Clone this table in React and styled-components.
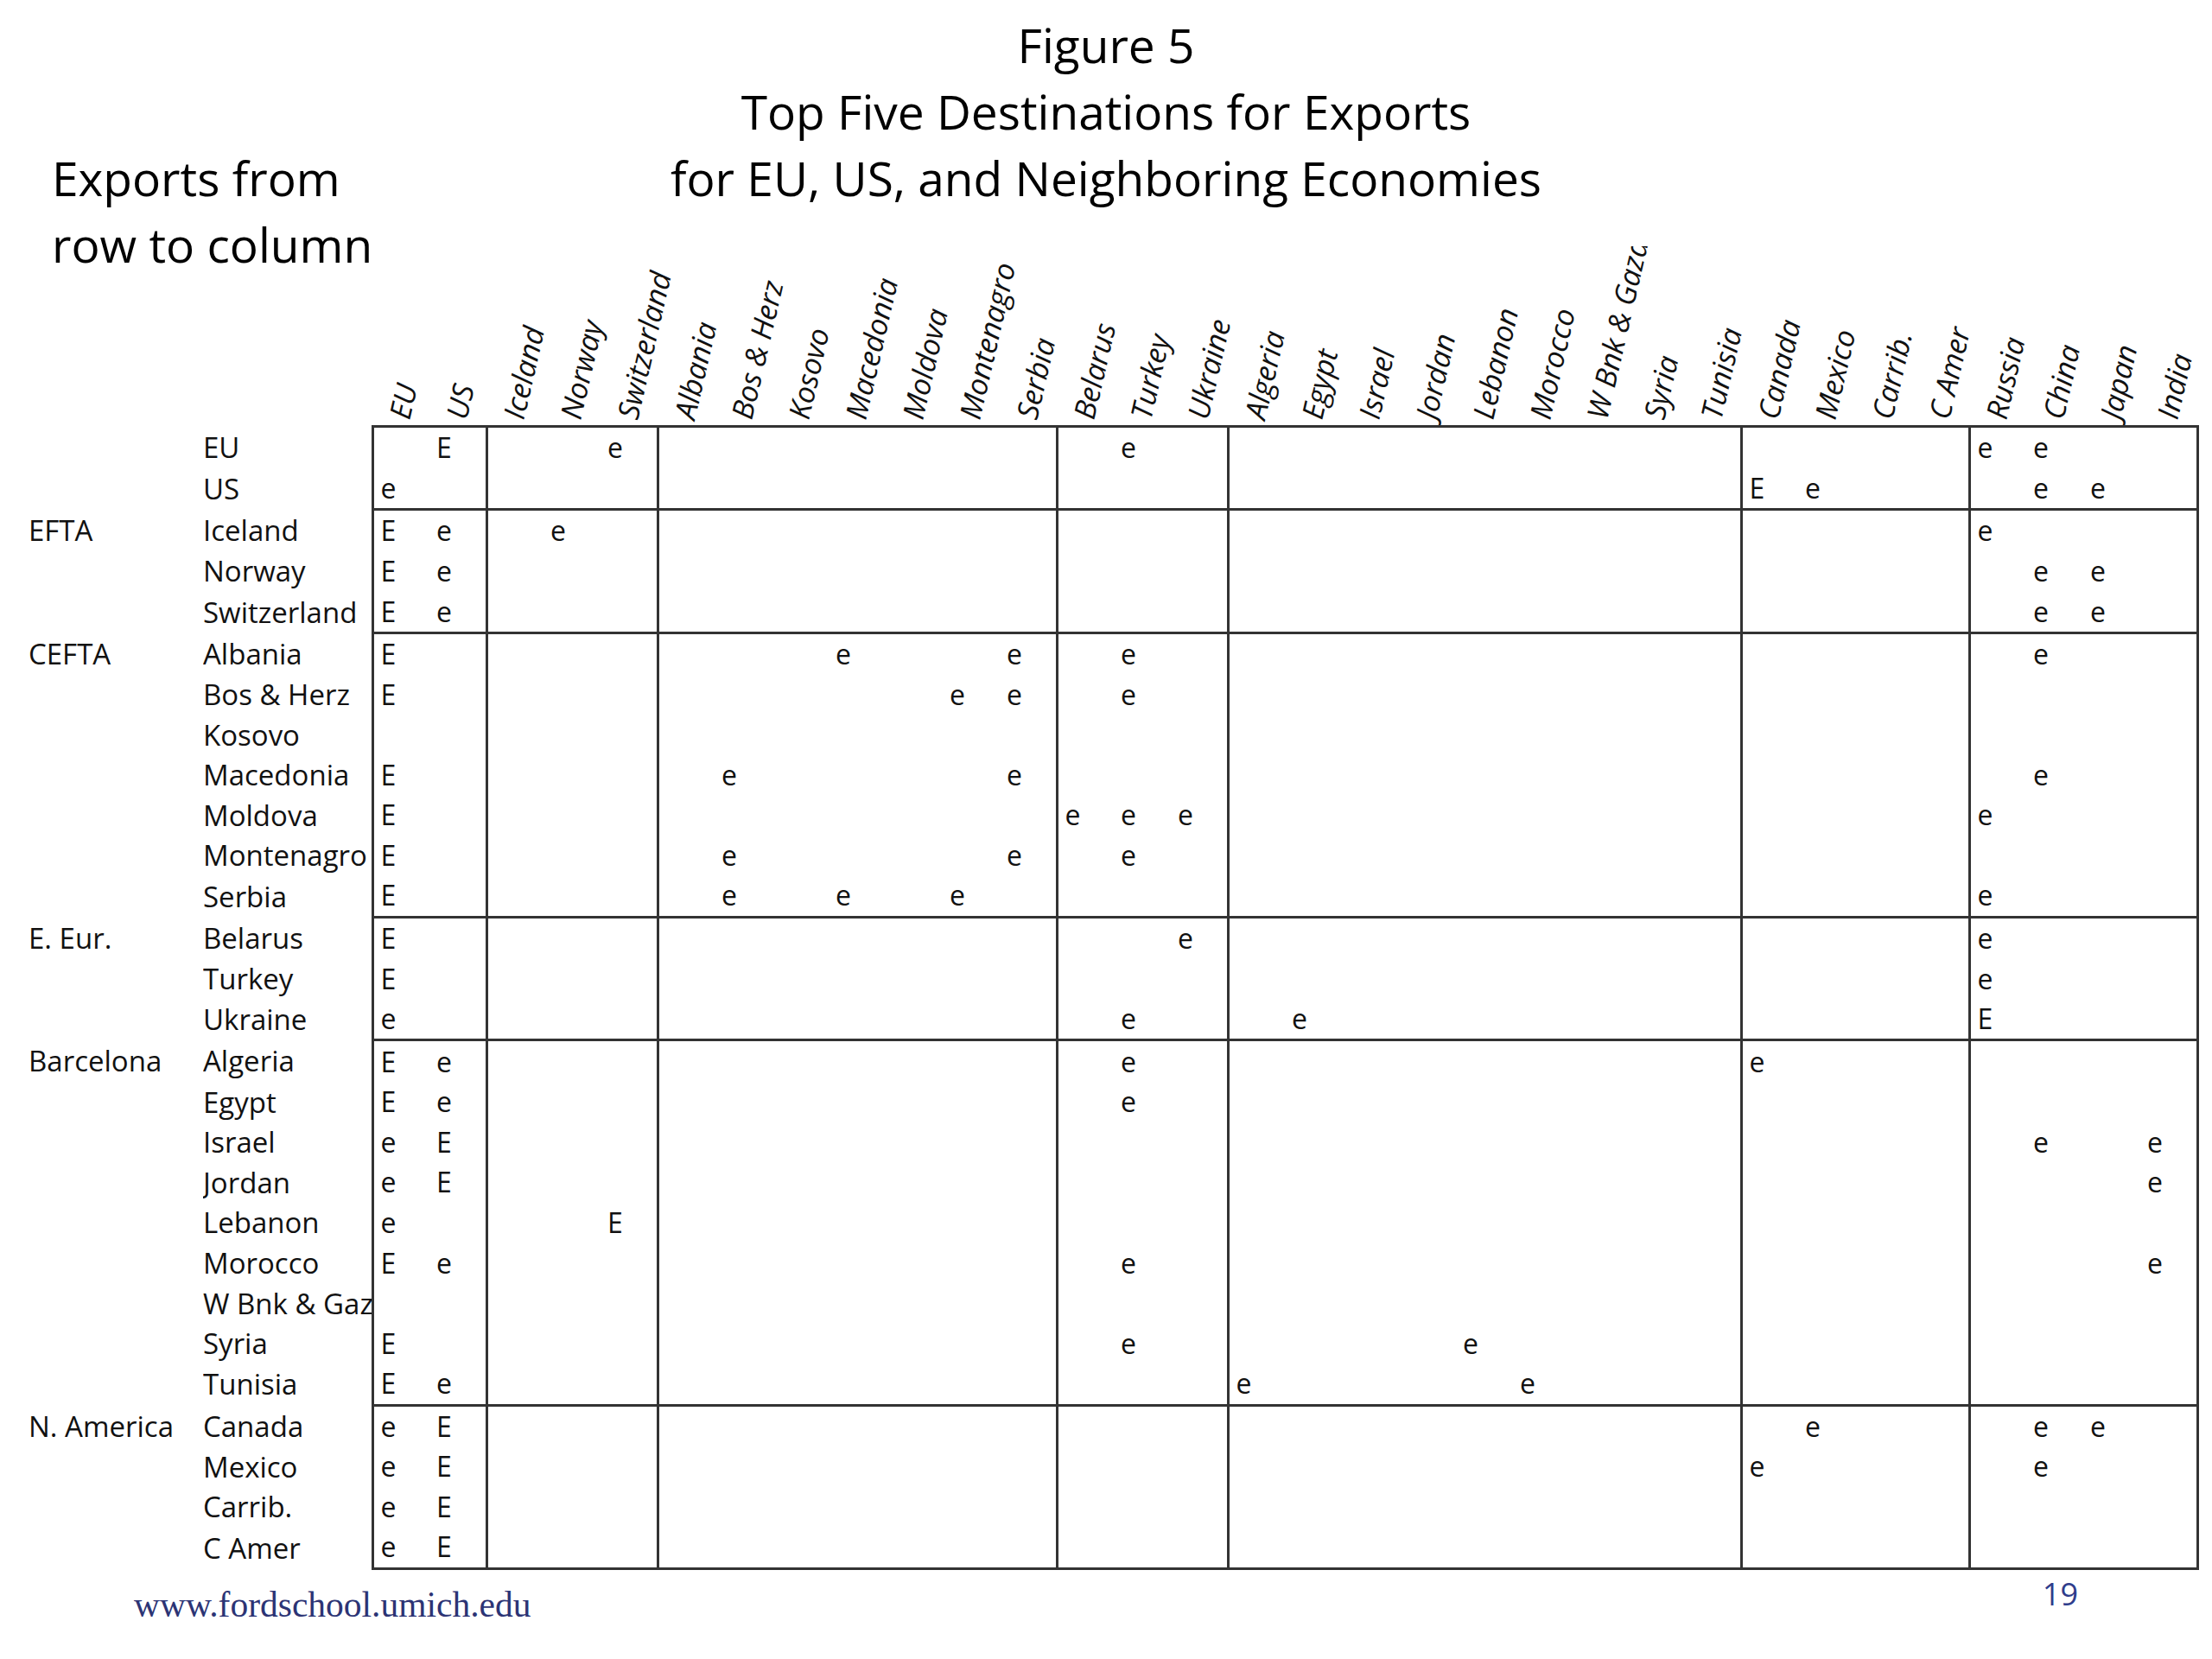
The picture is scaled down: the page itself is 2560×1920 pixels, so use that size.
import React from 'react';
// Styled
import styled, { createGlobalStyle } from 'styled-components';

const COL_W = 66;
const ROW_H = 46.57;

const columns = [
	'EU', 'US',
	'Iceland', 'Norway', 'Switzerland',
	'Albania', 'Bos & Herz', 'Kosovo', 'Macedonia', 'Moldova', 'Montenagro', 'Serbia',
	'Belarus', 'Turkey', 'Ukraine',
	'Algeria', 'Egypt', 'Israel', 'Jordan', 'Lebanon', 'Morocco', 'W Bnk & Gaza', 'Syria', 'Tunisia',
	'Canada', 'Mexico', 'Carrib.', 'C Amer',
	'Russia', 'China', 'Japan', 'India',
];

// last column of each block gets the heavy rule
const blockEnds = [1, 4, 11, 14, 23, 27, 31];

// exporter rows, marks keyed by destination column
const groups = [
	{
		name: '',
		rows: [
			['EU', { 1: 'E', 4: 'e', 13: 'e', 28: 'e', 29: 'e' }],
			['US', { 0: 'e', 24: 'E', 25: 'e', 29: 'e', 30: 'e' }],
		],
	},
	{
		name: 'EFTA',
		rows: [
			['Iceland', { 0: 'E', 1: 'e', 3: 'e', 28: 'e' }],
			['Norway', { 0: 'E', 1: 'e', 29: 'e', 30: 'e' }],
			['Switzerland', { 0: 'E', 1: 'e', 29: 'e', 30: 'e' }],
		],
	},
	{
		name: 'CEFTA',
		rows: [
			['Albania', { 0: 'E', 8: 'e', 11: 'e', 13: 'e', 29: 'e' }],
			['Bos & Herz', { 0: 'E', 10: 'e', 11: 'e', 13: 'e' }],
			['Kosovo', {}],
			['Macedonia', { 0: 'E', 6: 'e', 11: 'e', 29: 'e' }],
			['Moldova', { 0: 'E', 12: 'e', 13: 'e', 14: 'e', 28: 'e' }],
			['Montenagro', { 0: 'E', 6: 'e', 11: 'e', 13: 'e' }],
			['Serbia', { 0: 'E', 6: 'e', 8: 'e', 10: 'e', 28: 'e' }],
		],
	},
	{
		name: 'E. Eur.',
		rows: [
			['Belarus', { 0: 'E', 14: 'e', 28: 'e' }],
			['Turkey', { 0: 'E', 28: 'e' }],
			['Ukraine', { 0: 'e', 13: 'e', 16: 'e', 28: 'E' }],
		],
	},
	{
		name: 'Barcelona',
		rows: [
			['Algeria', { 0: 'E', 1: 'e', 13: 'e', 24: 'e' }],
			['Egypt', { 0: 'E', 1: 'e', 13: 'e' }],
			['Israel', { 0: 'e', 1: 'E', 29: 'e', 31: 'e' }],
			['Jordan', { 0: 'e', 1: 'E', 31: 'e' }],
			['Lebanon', { 0: 'e', 4: 'E' }],
			['Morocco', { 0: 'E', 1: 'e', 13: 'e', 31: 'e' }],
			['W Bnk & Gaza', {}],
			['Syria', { 0: 'E', 13: 'e', 19: 'e' }],
			['Tunisia', { 0: 'E', 1: 'e', 15: 'e', 20: 'e' }],
		],
	},
	{
		name: 'N. America',
		rows: [
			['Canada', { 0: 'e', 1: 'E', 25: 'e', 29: 'e', 30: 'e' }],
			['Mexico', { 0: 'e', 1: 'E', 24: 'e', 29: 'e' }],
			['Carrib.', { 0: 'e', 1: 'E' }],
			['C Amer', { 0: 'e', 1: 'E' }],
		],
	},
];

const App = () => {
	return (
		<Page>
			<GlobalStyle />
			<Top>
				<Title>
					Figure 5
					<br />
					Top Five Destinations for Exports
					<br />
					for EU, US, and Neighboring Economies
				</Title>
				<Caption>
					Exports from
					<br />
					row to column
				</Caption>
				<HeaderStrip>
					{columns.map((c) => (
						<HeaderCell key={c}>
							<HeaderText>{c}</HeaderText>
						</HeaderCell>
					))}
				</HeaderStrip>
			</Top>
			<Matrix>
				<colgroup>
					<col style={{ width: 235 }} />
					<col style={{ width: 196 }} />
					{columns.map((c) => (
						<col key={c} style={{ width: COL_W }} />
					))}
				</colgroup>
				<tbody>
					{groups.map((g, gi) =>
						g.rows.map(([label, marks], ri) => (
							<tr key={label}>
								<GroupLabel>{ri === 0 ? g.name : ''}</GroupLabel>
								<RowLabel>{label}</RowLabel>
								{columns.map((c, ci) => (
									<Mark
										key={c}
										$first={ci === 0}
										$top={gi === 0 && ri === 0}
										$right={blockEnds.includes(ci)}
										$bottom={ri === g.rows.length - 1}
									>
										{marks[ci] || ''}
									</Mark>
								))}
							</tr>
						))
					)}
				</tbody>
			</Matrix>
			<Footer>
				<Url>www.fordschool.umich.edu</Url>
				<PageNo>19</PageNo>
			</Footer>
		</Page>
	);
};

const GlobalStyle = createGlobalStyle`
	html, body {
		margin: 0;
		padding: 0;
		background: #ffffff;
	}
	body {
		width: 2560px;
		height: 1920px;
		overflow: hidden;
		font-family: 'Open Sans', sans-serif;
		color: #111111;
	}
`;

const Page = styled.div`
	width: 2560px;
	height: 1920px;
	display: flex;
	flex-direction: column;
	padding-top: 13px;
	box-sizing: border-box;
`;

const Top = styled.div`
	display: grid;
	grid-template-columns: 431px ${COL_W * 32}px 1fr;
	grid-template-rows: 231px 207px;
	row-gap: 41px;
`;

const Title = styled.h1`
	grid-column: 1 / -1;
	grid-row: 1;
	margin: 0;
	text-align: center;
	font-size: 55px;
	font-weight: 400;
	line-height: 77px;
	color: #000000;
`;

const Caption = styled.p`
	grid-column: 1;
	grid-row: 1 / 3;
	margin: 0;
	padding: 154px 0 0 60px;
	font-size: 55px;
	line-height: 77px;
	white-space: nowrap;
	color: #000000;
`;

// clips the tall labels at the top only, as the sheet's header row does
const HeaderStrip = styled.div`
	grid-column: 2;
	grid-row: 2;
	display: flex;
	clip-path: inset(0 -60px 0 -20px);
`;

const HeaderCell = styled.div`
	flex: 0 0 ${COL_W}px;
	height: 100%;
	position: relative;
`;

const HeaderText = styled.span`
	position: absolute;
	left: 47px;
	bottom: 4px;
	transform-origin: 0 100%;
	transform: rotate(-77deg);
	white-space: nowrap;
	font-size: 34px;
	font-style: italic;
	line-height: 1;
`;

const Matrix = styled.table`
	border-collapse: collapse;
	table-layout: fixed;
	width: ${431 + COL_W * 32}px;
	font-size: 33px;
	td {
		height: ${ROW_H}px;
		padding: 0;
		white-space: nowrap;
		overflow: hidden;
		line-height: 1;
	}
`;

const GroupLabel = styled.td`
	padding-left: 33px !important;
`;

const RowLabel = styled.td`
	text-overflow: clip;
`;

const Mark = styled.td`
	padding-left: 8px !important;
	font-size: 32px;
	border-left: ${(p) => (p.$first ? '3px solid #333' : 'none')};
	border-top: ${(p) => (p.$top ? '3px solid #333' : 'none')};
	border-right: ${(p) => (p.$right ? '3px solid #333' : 'none')};
	border-bottom: ${(p) => (p.$bottom ? '3px solid #333' : 'none')};
`;

const Footer = styled.div`
	display: flex;
	justify-content: space-between;
	align-items: flex-start;
	padding: 6px 155px 0 155px;
`;

const Url = styled.span`
	margin-top: 10px;
	font-family: 'Liberation Serif', serif;
	font-size: 41.5px;
	line-height: 1.2;
	color: #2c3475;
`;

const PageNo = styled.span`
	font-size: 36px;
	line-height: 1.2;
	color: #2f3d8c;
`;

export default App;
